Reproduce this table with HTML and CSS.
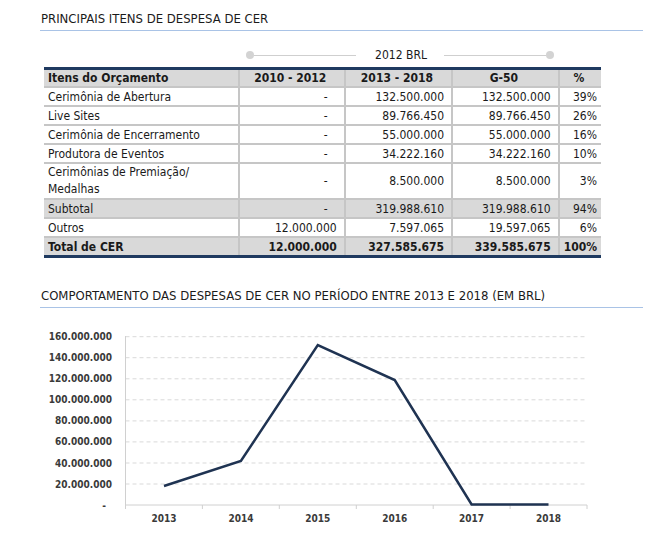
FILE: index.html
```
<!DOCTYPE html>
<html lang="pt">
<head>
<meta charset="utf-8">
<title>Despesas de CER</title>
<link rel="stylesheet" href="styles.css">
</head>
<body>
<div class="page">
  <h2 class="title">PRINCIPAIS ITENS DE DESPESA DE CER</h2>
  <div class="currency">
    <span class="dot"></span><span class="line"></span>
    <span class="cur-label">2012 BRL</span>
    <span class="line"></span><span class="dot"></span>
  </div>
  <table class="budget">
    <thead>
      <tr><th class="item">Itens do Orçamento</th><th>2010 - 2012</th><th>2013 - 2018</th><th>G-50</th><th>%</th></tr>
    </thead>
    <tbody>
      <tr><td class="item">Cerimônia de Abertura</td><td class="num dash">-</td><td class="num">132.500.000</td><td class="num">132.500.000</td><td class="pct">39%</td></tr>
      <tr><td class="item">Live Sites</td><td class="num dash">-</td><td class="num">89.766.450</td><td class="num">89.766.450</td><td class="pct">26%</td></tr>
      <tr><td class="item">Cerimônia de Encerramento</td><td class="num dash">-</td><td class="num">55.000.000</td><td class="num">55.000.000</td><td class="pct">16%</td></tr>
      <tr><td class="item">Produtora de Eventos</td><td class="num dash">-</td><td class="num">34.222.160</td><td class="num">34.222.160</td><td class="pct">10%</td></tr>
      <tr class="tall"><td class="item">Cerimônias de Premiação/<br>Medalhas</td><td class="num dash">-</td><td class="num">8.500.000</td><td class="num">8.500.000</td><td class="pct">3%</td></tr>
      <tr class="shaded"><td class="item">Subtotal</td><td class="num dash">-</td><td class="num">319.988.610</td><td class="num">319.988.610</td><td class="pct">94%</td></tr>
      <tr><td class="item">Outros</td><td class="num">12.000.000</td><td class="num">7.597.065</td><td class="num">19.597.065</td><td class="pct">6%</td></tr>
      <tr class="shaded total"><td class="item">Total de CER</td><td class="num">12.000.000</td><td class="num">327.585.675</td><td class="num">339.585.675</td><td class="pct">100%</td></tr>
    </tbody>
  </table>

  <h2 class="title chart-title">COMPORTAMENTO DAS DESPESAS DE CER NO PERÍODO ENTRE 2013 E 2018 (EM BRL)</h2>
  <svg class="chart" width="603" height="220" viewBox="0 0 603 220">
    <g class="grid">
      <line x1="85.5" y1="21.7" x2="547" y2="21.7"/>
      <line x1="85.5" y1="42.7" x2="547" y2="42.7"/>
      <line x1="85.5" y1="63.8" x2="547" y2="63.8"/>
      <line x1="85.5" y1="84.8" x2="547" y2="84.8"/>
      <line x1="85.5" y1="105.9" x2="547" y2="105.9"/>
      <line x1="85.5" y1="126.9" x2="547" y2="126.9"/>
      <line x1="85.5" y1="148" x2="547" y2="148"/>
      <line x1="85.5" y1="169" x2="547" y2="169"/>
    </g>
    <g class="axis">
      <line x1="85.5" y1="21" x2="85.5" y2="190"/>
      <line x1="85.5" y1="190" x2="547" y2="190"/>
      <line x1="85.5" y1="190" x2="85.5" y2="194"/>
      <line x1="162.4" y1="190" x2="162.4" y2="194"/>
      <line x1="239.3" y1="190" x2="239.3" y2="194"/>
      <line x1="316.3" y1="190" x2="316.3" y2="194"/>
      <line x1="393.2" y1="190" x2="393.2" y2="194"/>
      <line x1="470.1" y1="190" x2="470.1" y2="194"/>
      <line x1="547" y1="190" x2="547" y2="194"/>
    </g>
    <g class="ylabels">
      <text x="72" y="25.2">160.000.000</text>
      <text x="72" y="46.2">140.000.000</text>
      <text x="72" y="67.3">120.000.000</text>
      <text x="72" y="88.3">100.000.000</text>
      <text x="72" y="109.4">80.000.000</text>
      <text x="72" y="130.4">60.000.000</text>
      <text x="72" y="151.5">40.000.000</text>
      <text x="72" y="172.5">20.000.000</text>
      <text x="66" y="193.5">-</text>
    </g>
    <g class="xlabels">
      <text x="124" y="207">2013</text>
      <text x="200.9" y="207">2014</text>
      <text x="277.8" y="207">2015</text>
      <text x="354.7" y="207">2016</text>
      <text x="431.6" y="207">2017</text>
      <text x="508.5" y="207">2018</text>
    </g>
    <polyline class="series" points="124,171 200.9,146 277.8,30 354.7,65 431.6,189.5 508.5,189.5"/>
  </svg>
</div>
</body>
</html>
```
FILE: styles.css
```
html, body {
  margin: 0;
  padding: 0;
  background: #ffffff;
}
body {
  font-family: "DejaVu Sans Condensed", "DejaVu Sans", sans-serif;
  color: #1a1a1a;
}
.page {
  padding: 10px 12px 0 40px;
}
.title {
  margin: 0;
  font-size: 13px;
  line-height: 17px;
  font-weight: normal;
  color: #1a1a1a;
  padding: 0 0 3px 1px;
  border-bottom: 1px solid #a9c3e6;
}
.currency {
  display: flex;
  align-items: center;
  width: 308px;
  height: 20px;
  margin: 14px 0 0 206px;
}
.dot {
  width: 8px;
  height: 8px;
  border-radius: 50%;
  background: #d3d3d3;
  flex: none;
}
.line {
  flex: 1;
  height: 1px;
  background: #cfcfcf;
}
.cur-label {
  font-size: 12px;
  padding: 0 17px 0 19px;
  color: #1a1a1a;
}
.budget {
  margin: 2px 0 0 4px;
  width: 557px;
  border-collapse: collapse;
  font-size: 12px;
  border-top: 3px solid #1f3a60;
  border-bottom: 3px solid #1f3a60;
}
.budget th, .budget td {
  height: 17px;
  line-height: 16px;
  padding: 0 7px 0 4px;
  border: 2px solid #c6c6c6;
  white-space: nowrap;
}
.budget tr > :first-child { border-left: none; }
.budget tr > :last-child { border-right: none; }
.budget thead tr > * { border-top: none; }
.budget tbody tr:last-child > * { border-bottom: none; }
.budget th {
  height: 16px;
  background: #d9d9d9;
  font-weight: bold;
  text-align: center;
}
.budget th.item { text-align: left; width: 187px; }
.budget th:nth-child(2) { width: 96px; }
.budget th:nth-child(3) { width: 97px; }
.budget th:nth-child(4) { width: 96px; }
.budget td.num { text-align: right; }
.budget td.dash { padding-right: 16px; }
.budget td.pct { text-align: right; padding-right: 4px; }
.budget tr.tall td { line-height: 17px; }
.budget tr.shaded td { background: #d9d9d9; }
.budget tr.total td { font-weight: bold; }
.chart-title {
  margin-top: 29px;
}
.chart {
  display: block;
  margin-top: 7px;
}
.grid line {
  stroke: #d9d9d9;
  stroke-width: 1;
  stroke-dasharray: 4 3;
}
.axis line {
  stroke: #d0d0d0;
  stroke-width: 1;
}
.ylabels text {
  font-family: "DejaVu Sans Condensed", "DejaVu Sans", sans-serif;
  font-size: 10px;
  font-weight: bold;
  fill: #3a3a3a;
  text-anchor: end;
}
.xlabels text {
  font-family: "DejaVu Sans Condensed", "DejaVu Sans", sans-serif;
  font-size: 10px;
  font-weight: bold;
  fill: #3a3a3a;
  text-anchor: middle;
}
.series {
  fill: none;
  stroke: #1f3352;
  stroke-width: 2.5;
  stroke-linejoin: miter;
}
```
